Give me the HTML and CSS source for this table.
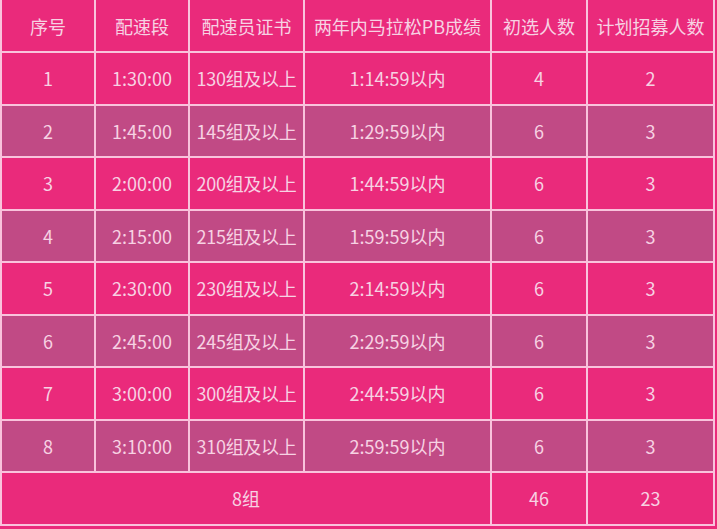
FILE: index.html
```html
<!DOCTYPE html>
<html lang="zh">
<head>
<meta charset="utf-8">
<title>配速员招募</title>
<link rel="stylesheet" href="styles.css">
</head>
<body>
<table class="pace">
  <colgroup>
    <col class="c1"><col class="c2"><col class="c3"><col class="c4"><col class="c5"><col class="c6">
  </colgroup>
  <thead>
    <tr class="head">
      <th>序号</th><th>配速段</th><th>配速员证书</th><th>两年内马拉松PB成绩</th><th>初选人数</th><th>计划招募人数</th>
    </tr>
  </thead>
  <tbody>
    <tr class="odd"><td>1</td><td>1:30:00</td><td class="cert">130组及以上</td><td>1:14:59以内</td><td>4</td><td>2</td></tr>
    <tr class="even"><td>2</td><td>1:45:00</td><td class="cert">145组及以上</td><td>1:29:59以内</td><td>6</td><td>3</td></tr>
    <tr class="odd"><td>3</td><td>2:00:00</td><td class="cert">200组及以上</td><td>1:44:59以内</td><td>6</td><td>3</td></tr>
    <tr class="even"><td>4</td><td>2:15:00</td><td class="cert">215组及以上</td><td>1:59:59以内</td><td>6</td><td>3</td></tr>
    <tr class="odd"><td>5</td><td>2:30:00</td><td class="cert">230组及以上</td><td>2:14:59以内</td><td>6</td><td>3</td></tr>
    <tr class="even"><td>6</td><td>2:45:00</td><td class="cert">245组及以上</td><td>2:29:59以内</td><td>6</td><td>3</td></tr>
    <tr class="odd"><td>7</td><td>3:00:00</td><td class="cert">300组及以上</td><td>2:44:59以内</td><td>6</td><td>3</td></tr>
    <tr class="even"><td>8</td><td>3:10:00</td><td class="cert">310组及以上</td><td>2:59:59以内</td><td>6</td><td>3</td></tr>
    <tr class="odd total"><td colspan="4">8组</td><td>46</td><td>23</td></tr>
  </tbody>
</table>
</body>
</html>
```

FILE: styles.css
```css
html, body {
  margin: 0;
  padding: 0;
  background: #ea2a7b;
}
body {
  width: 717px;
  height: 529px;
  overflow: hidden;
  font-family: "Noto Sans CJK SC", "Noto Sans", sans-serif;
  color: #f7d2e3;
}
.pace {
  border-collapse: collapse;
  table-layout: fixed;
  width: 715px;
  border-top: hidden;
}
.c1 { width: 94px; }
.c2 { width: 94px; }
.c3 { width: 115px; }
.c4 { width: 187px; }
.c5 { width: 96px; }
.c6 { width: 127px; }
.pace th, .pace td {
  border: 2px solid #f9c3dc;
  padding: 0;
  text-align: center;
  vertical-align: middle;
  font-weight: 400;
  font-size: 18px;
  white-space: nowrap;
  overflow: hidden;
}
.head th { height: 51px; background: #ea2a7b; }
.odd td { height: 50.5px; background: #ea2a7b; }
.even td { height: 50.5px; background: #c14a85; }
.pace .cert { letter-spacing: -0.3px; }
```
